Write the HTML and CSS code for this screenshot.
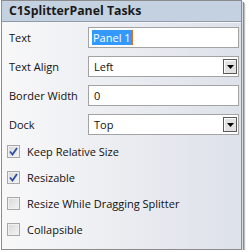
FILE: index.html
```html
<!DOCTYPE html>
<html>
<head>
<meta charset="utf-8">
<link rel="stylesheet" href="styles.css">
</head>
<body>
<div class="panel">
  <div class="header">C1SplitterPanel Tasks</div>
  <div class="content">
    <div class="form">
      <label class="lbl">Text</label>
      <div class="field"><span class="sel">Panel 1</span><span class="caret"></span></div>
      <label class="lbl">Text Align</label>
      <div class="field combo"><span class="val">Left</span><span class="drop"><svg width="7" height="4" viewBox="0 0 7 4"><path d="M0 0H7L3.5 4Z" fill="#000"/></svg></span></div>
      <label class="lbl">Border Width</label>
      <div class="field"><span class="val">0</span></div>
      <label class="lbl">Dock</label>
      <div class="field combo"><span class="val">Top</span><span class="drop"><svg width="7" height="4" viewBox="0 0 7 4"><path d="M0 0H7L3.5 4Z" fill="#000"/></svg></span></div>
    </div>
    <div class="checks">
      <div class="check"><span class="box on"><svg width="9" height="9" viewBox="0 0 9 9"><path d="M1 4.5L3.5 7.5L8 1" fill="none" stroke="#2c4fa3" stroke-width="1.8"/></svg></span>Keep Relative Size</div>
      <div class="check"><span class="box on"><svg width="9" height="9" viewBox="0 0 9 9"><path d="M1 4.5L3.5 7.5L8 1" fill="none" stroke="#2c4fa3" stroke-width="1.8"/></svg></span>Resizable</div>
      <div class="check"><span class="box"></span>Resize While Dragging Splitter</div>
      <div class="check"><span class="box"></span>Collapsible</div>
    </div>
  </div>
</div>
</body>
</html>
```
FILE: styles.css
```css
html, body {
  margin: 0;
  padding: 0;
  background: #ffffff;
}
body {
  font-family: "Open Sans", "Noto Sans", sans-serif;
  font-size: 11px;
  color: #111111;
}
.panel {
  margin-left: 1px;
  width: 239px;
  height: 248px;
  border: 1px solid #8c8c8c;
  box-shadow: 1px 1px 0 #d8dbe0, 2px 2px 0 #8a8a8a, 3px 3px 1px rgba(0,0,0,0.25);
  background: linear-gradient(to right, #f8f8f9, #dde1e9);
  display: flex;
  flex-direction: column;
}
.header {
  height: 20px;
  line-height: 20px;
  background: #c4d1e1;
  border-bottom: 1px solid #8f9aa8;
  box-shadow: 0 1px 0 #f4f6f9;
  padding-left: 7px;
  font-weight: bold;
  font-size: 12.3px;
  color: #1a1a1a;
}
.content {
  padding: 5px 0 0 7px;
}
.form {
  display: grid;
  grid-template-columns: 79px 151px;
  grid-auto-rows: 21px;
  row-gap: 8px;
  align-items: center;
}
.lbl {
  line-height: 21px;
}
.field {
  height: 21px;
  box-sizing: border-box;
  border: 1px solid #a3a3a3;
  background: #fff;
  display: flex;
  align-items: center;
  padding-left: 3px;
  position: relative;
}
.val {
  padding-left: 2px;
}
.sel {
  background: #3399ff;
  color: #fff;
  padding: 0 1px;
  line-height: 15px;
}
.caret {
  width: 1px;
  height: 15px;
  background: #e07020;
}
.combo {
  justify-content: space-between;
  padding-right: 1px;
}
.drop {
  width: 14px;
  height: 15px;
  box-sizing: border-box;
  border: 1px solid #5a5a5a;
  box-shadow: inset 1px 1px 0 #ffffff;
  background: #e2e2e2;
  display: flex;
  align-items: center;
  justify-content: center;
}
.checks {
  margin-top: 3px;
  margin-left: -2px;
}
.check {
  height: 26px;
  display: flex;
  align-items: center;
}
.box {
  width: 13px;
  height: 13px;
  box-sizing: border-box;
  border: 1px solid #a8a8a8;
  background: linear-gradient(135deg, #d8d8d8, #f4f4f4);
  box-shadow: inset 0 0 0 1px #f0f0f0;
  margin-right: 7px;
  display: flex;
  align-items: center;
  justify-content: center;
}
```
